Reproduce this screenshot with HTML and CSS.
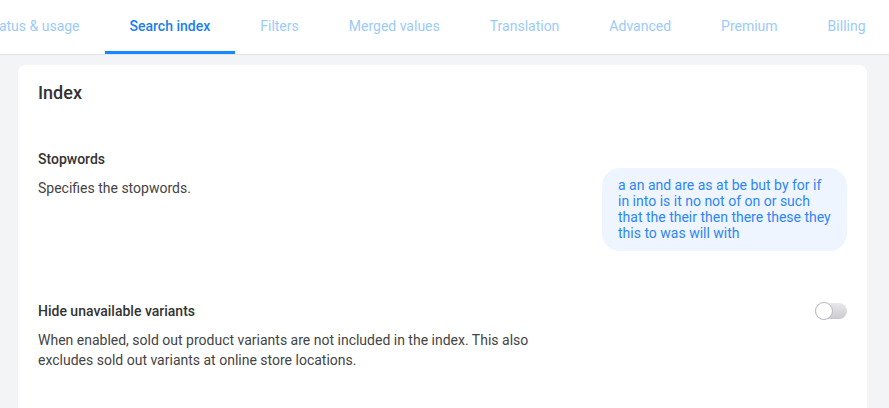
FILE: index.html
```html
<!DOCTYPE html>
<html lang="en">
<head>
  <meta charset="UTF-8">
  <meta name="viewport" content="width=device-width, initial-scale=1.0">
  <title>Search index</title>
  <link rel="stylesheet" href="styles.css">
</head>
<body>

  <nav class="tabs">
    <div class="tab-strip">
      <a class="tab">Status &amp; usage</a>
      <a class="tab active">Search index</a>
      <a class="tab">Filters</a>
      <a class="tab">Merged values</a>
      <a class="tab">Translation</a>
      <a class="tab">Advanced</a>
      <a class="tab">Premium</a>
      <a class="tab">Billing</a>
    </div>
  </nav>

  <div class="card">
    <h2>Index</h2>

    <div class="setting stopwords">
      <div class="setting-info">
        <div class="setting-title">Stopwords</div>
        <div class="setting-desc">Specifies the stopwords.</div>
      </div>
      <div class="words">a an and are as at be but by for if in into is it no not of on or such that the their then there these they this to was will with</div>
    </div>

    <div class="setting variants">
      <div class="setting-info">
        <div class="setting-title">Hide unavailable variants</div>
        <div class="setting-desc">When enabled, sold out product variants are not included in the index. This also excludes sold out variants at online store locations.</div>
      </div>
      <label class="toggle"><span class="knob"></span></label>
    </div>
  </div>

</body>
</html>
```

FILE: styles.css
```css
body {
  margin: 0;
  font-family: Roboto, "Liberation Sans", sans-serif;
  background: #f3f4f6;
  color: #333;
  overflow: hidden;
}
.tabs {
  background: #fff;
  height: 54px;
  border-bottom: 1px solid #e4e4e6;
  overflow: hidden;
}
.tab-strip {
  display: flex;
  margin-left: -39px;
  height: 54px;
}
.tab {
  flex: none;
  padding: 0 25px;
  font-size: 14px;
  line-height: 52px;
  color: #9ccbfb;
  border-bottom: 3px solid transparent;
  white-space: nowrap;
}
.tab.active {
  color: #1a80f0;
  font-weight: 500;
  border-bottom-color: #1589ff;
}
.card {
  background: #fff;
  margin: 10px 22px 0 18px;
  border-radius: 8px;
  padding: 16px 20px 40px;
  height: 400px;
}
h2 {
  margin: 0;
  font-size: 18px;
  line-height: 24px;
  font-weight: 500;
  color: #333;
}
.setting {
  display: flex;
  justify-content: space-between;
  align-items: flex-start;
}
.stopwords {
  margin-top: 44px;
}
.variants {
  margin-top: 50px;
}
.setting-info {
  max-width: 505px;
}
.setting-title {
  font-size: 14px;
  font-weight: 500;
  line-height: 20px;
  color: #333;
}
.setting-desc {
  margin-top: 9px;
  font-size: 14px;
  line-height: 20px;
  color: #444;
}
.words {
  box-sizing: border-box;
  width: 245px;
  margin-top: 19px;
  padding: 9px 16px 10px;
  background: #eff5ff;
  border-radius: 18px;
  font-size: 14px;
  line-height: 16px;
  color: #2e85f7;
}
.toggle {
  position: relative;
  box-sizing: border-box;
  width: 32px;
  height: 16px;
  margin-top: 2px;
  border-radius: 8px;
  background: linear-gradient(#e9e9ec, #c9cacf);
}
.knob {
  position: absolute;
  left: 0;
  top: -1px;
  box-sizing: border-box;
  width: 18px;
  height: 18px;
  border-radius: 50%;
  background: #fff;
  border: 1px solid #b9bac4;
}
```
